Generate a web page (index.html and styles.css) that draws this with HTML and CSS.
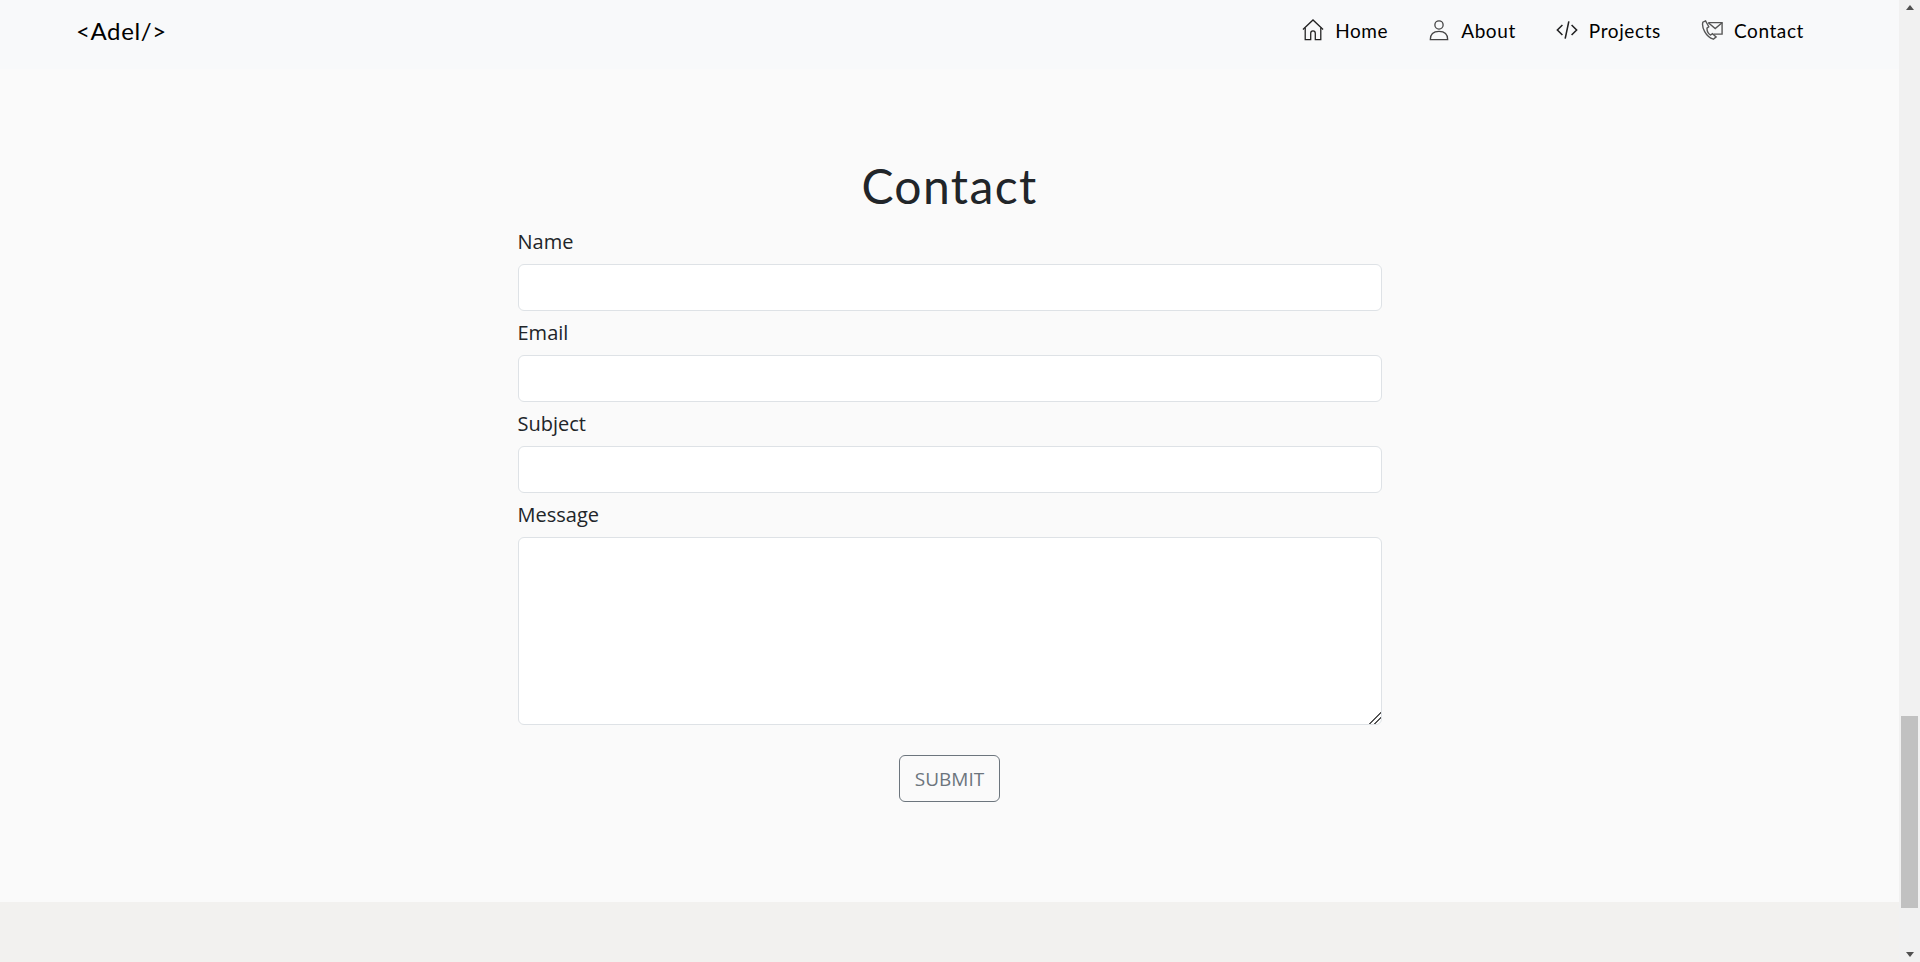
FILE: index.html
```html
<!DOCTYPE html>
<html lang="en">

<head>
  <meta charset="UTF-8" />
  <meta name="viewport" content="width=device-width, initial-scale=1.0" />
  <title>Adel | Contact</title>
  <link rel="stylesheet" href="styles.css">
</head>

<body>
  <div class="page">
    <div class="main">
      <nav class="navbar">
        <a class="brand" href="#">&lt;Adel/&gt;</a>
        <ul class="nav-links">
          <li>
            <a href="#">
              <svg class="nav-icon" viewBox="0 0 24 24" fill="none" stroke="#222" stroke-width="1.400">
                <path d="M1 11.500 12 1l11 10.500" />
                <path d="M3.500 9.500V22.500h6v-7a2.500 2.500 0 0 1 5 0v7h6V9.500" />
              </svg>
              Home
            </a>
          </li>
          <li>
            <a href="#">
              <svg class="nav-icon" viewBox="0 0 24 24" fill="none" stroke="#444" stroke-width="1.400">
                <circle cx="12" cy="6.500" r="4.500" />
                <path d="M2.500 22.500c0-6 3.500-9 9.500-9s9.500 3 9.500 9z" />
              </svg>
              About
            </a>
          </li>
          <li>
            <a href="#">
              <svg class="nav-icon" viewBox="0 0 24 24" fill="none" stroke="#222" stroke-width="1.700">
                <path d="M7 6.500 1.500 12 7 17.500" />
                <path d="M17 6.500 22.500 12 17 17.500" />
                <path d="M14 2.500 10 21.500" />
              </svg>
              Projects
            </a>
          </li>
          <li>
            <a href="#">
              <svg class="nav-icon" viewBox="0 0 24 24" fill="none" stroke="#555" stroke-width="1.500">
                <path d="M8 4h15v12.500H14" />
                <path d="m8 4 7.500 6.500L23 4" />
                <path d="M5 2 2 3.500C0.500 9 5 19 13.500 22l3-2.500-4-3.500-2 1.500C8 16 6.500 12.500 6.500 10L8.500 8.500z" />
              </svg>
              Contact
            </a>
          </li>
        </ul>
      </nav>

      <section class="contact">
        <h1>Contact</h1>
        <form class="contact-form">
          <div class="field">
            <label for="name">Name</label>
            <input type="text" id="name" />
          </div>
          <div class="field">
            <label for="email">Email</label>
            <input type="text" id="email" />
          </div>
          <div class="field">
            <label for="subject">Subject</label>
            <input type="text" id="subject" />
          </div>
          <div class="field">
            <label for="message">Message</label>
            <textarea id="message"></textarea>
          </div>
          <div class="submit-row">
            <button type="button">SUBMIT</button>
          </div>
        </form>
      </section>

      <footer class="footer"></footer>
    </div>

    <!-- fake scrollbar, the shot is taken scrolled to the bottom -->
    <div class="scrollbar">
      <span class="arrow-up"></span>
      <span class="thumb"></span>
      <span class="arrow-down"></span>
    </div>
  </div>
</body>

</html>
```

FILE: styles.css
```css
body {
  margin: 0;
  padding: 0;
  font-family: "Open Sans", Arial, sans-serif;
  background-color: #fafafa;
  color: #212529;
}

.page {
  display: flex;
  height: 962px;
  overflow: hidden;
}

.main {
  flex: 1;
  display: flex;
  flex-direction: column;
}

.navbar {
  box-sizing: border-box;
  height: 69px;
  padding: 0 95px 8px 76px;
  background-color: #f8f9fa;
  display: flex;
  justify-content: space-between;
  align-items: center;
  font-family: "Lato", sans-serif;
}

.brand {
  color: #000;
  font-size: 24px;
  letter-spacing: 0.6px;
  text-decoration: none;
}

.nav-links {
  list-style: none;
  margin: 0;
  padding: 0;
  display: flex;
  gap: 40px;
}

.nav-links a {
  display: flex;
  align-items: center;
  gap: 11px;
  color: #000;
  font-size: 19px;
  letter-spacing: 0.6px;
  text-decoration: none;
}

.nav-icon {
  width: 22px;
  height: 22px;
  margin-bottom: 2px;
}

.contact {
  flex: 1;
  width: 864px;
  margin: 0 auto;
  padding-top: 88px;
}

.contact h1 {
  margin: 0 0 13px;
  font-family: "Lato", sans-serif;
  font-weight: 400;
  font-size: 48px;
  line-height: 58px;
  text-align: center;
  letter-spacing: 1.4px;
}

.field {
  margin-bottom: 8px;
}

.field label {
  display: block;
  font-size: 20px;
  line-height: 28px;
  margin-bottom: 8px;
}

.field input,
.field textarea {
  display: block;
  box-sizing: border-box;
  width: 100%;
  border: 1px solid #dee2e6;
  border-radius: 6px;
  background-color: #fff;
}

.field input {
  height: 47px;
}

.field textarea {
  height: 188px;
}

textarea::-webkit-resizer {
  background: linear-gradient(135deg, transparent 58%, #555 58%, #555 65%, transparent 65%, transparent 76%, #555 76%, #555 83%, transparent 83%);
}

.submit-row {
  margin-top: 30px;
  text-align: center;
}

button {
  height: 47px;
  padding: 0 15px;
  background-color: transparent;
  color: #6c757d;
  border: 1px solid #6c757d;
  border-radius: 6px;
  font-family: inherit;
  font-size: 19px;
}

.footer {
  height: 60px;
  background-color: #f2f1ef;
}

.scrollbar {
  width: 21px;
  background-color: #f1f1f1;
  display: flex;
  flex-direction: column;
  align-items: center;
}

.arrow-up {
  margin-top: 5px;
  border: 4.5px solid transparent;
  border-top: 0;
  border-bottom: 5px solid #505050;
}

.thumb {
  width: 17px;
  height: 192px;
  margin-top: auto;
  margin-bottom: 44px;
  background-color: #c1c1c1;
}

.arrow-down {
  margin-bottom: 5px;
  border: 4.5px solid transparent;
  border-bottom: 0;
  border-top: 5px solid #505050;
}
```
